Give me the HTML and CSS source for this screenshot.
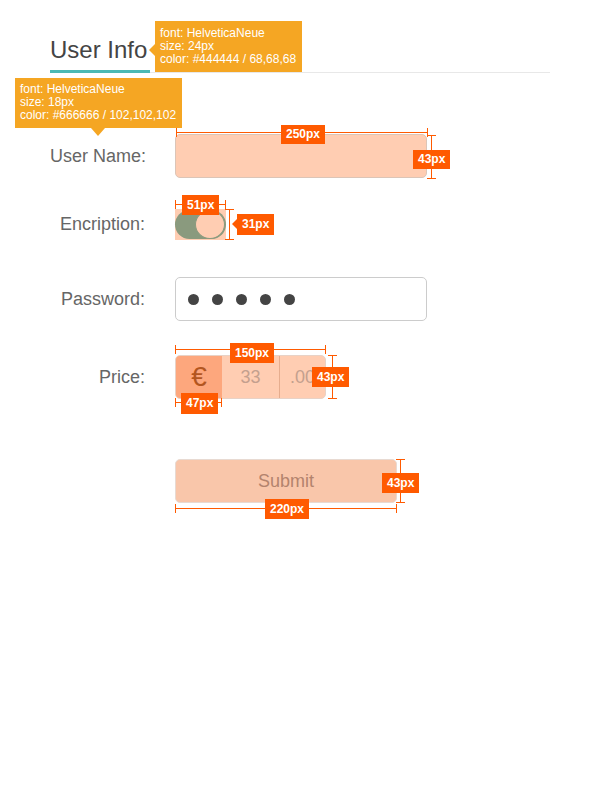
FILE: index.html
```html
<!DOCTYPE html>
<html>
<head>
<meta charset="utf-8">
<link rel="stylesheet" href="styles.css">
</head>
<body>
<div class="page">
  <div class="tabs">
    <div class="tab">User Info</div>
  </div>
  <div class="tip tip-left">font: HelveticaNeue<br>size: 24px<br>color: #444444 / 68,68,68</div>

  <div class="form">
    <div class="row row-name">
      <div class="label label-host">User Name:
        <div class="tip tip-down">font: HelveticaNeue<br>size: 18px<br>color: #666666 / 102,102,102</div>
      </div>
      <div class="field input-name">
        <div class="hline hl-name"></div>
        <div class="dim dim-name-w">250px</div>
        <div class="vline vl-name"></div>
        <div class="dim dim-name-h">43px</div>
      </div>
    </div>

    <div class="row row-enc">
      <div class="label">Encription:</div>
      <div class="field toggle">
        <div class="pill"><div class="knob"></div></div>
        <div class="hline hl-tog"></div>
        <div class="dim dim-tog-w">51px</div>
        <div class="vline vl-tog"></div>
        <div class="dim dim-tog-h arrow-left">31px</div>
      </div>
    </div>

    <div class="row row-pass">
      <div class="label">Password:</div>
      <div class="field input-pass">
        <span class="dot"></span><span class="dot"></span><span class="dot"></span><span class="dot"></span><span class="dot"></span>
      </div>
    </div>

    <div class="row row-price">
      <div class="label">Price:</div>
      <div class="field price">
        <div class="price-box">
          <div class="cell euro">€</div>
          <div class="cell whole">33</div>
          <div class="cell cents">.00</div>
        </div>
        <div class="hline hl-price"></div>
        <div class="dim dim-price-w">150px</div>
        <div class="vline vl-price"></div>
        <div class="dim dim-price-h">43px</div>
        <div class="hline hl-euro"></div>
        <div class="dim dim-euro-w">47px</div>
      </div>
    </div>

    <div class="row row-submit">
      <div class="label"></div>
      <div class="field submit-host">
        <div class="submit">Submit</div>
        <div class="vline vl-sub"></div>
        <div class="dim dim-sub-h">43px</div>
        <div class="hline hl-sub"></div>
        <div class="dim dim-sub-w">220px</div>
      </div>
    </div>
  </div>
</div>
</body>
</html>
```

FILE: styles.css
```css
* { box-sizing: border-box; }
html, body { margin: 0; padding: 0; background: #fff; }
body { font-family: "Liberation Sans", Arial, sans-serif; width: 600px; height: 800px; }

.page { position: relative; padding: 36px 50px 0; width: 600px; }

.tabs { display: flex; border-bottom: 1px solid #e8e8e8; width: 500px; }
.tab {
  width: 100px;
  font-size: 24px; line-height: 28px; color: #444;
  padding-bottom: 6px;
  border-bottom: 3px solid #4cb9b3;
  margin-bottom: -1px;
}

.tip {
  position: absolute;
  background: #f5a623;
  color: #fff;
  font-size: 12px; line-height: 13px;
  white-space: nowrap;
  z-index: 5;
}
.tip-left { left: 155px; top: 21px; width: 147px; height: 51px; padding: 6px 5px; }
.tip-left::before {
  content: ""; position: absolute; left: -6px; top: 23px;
  border-top: 6px solid transparent; border-bottom: 6px solid transparent;
  border-right: 6px solid #f5a623;
}
.tip-down { left: -35px; top: -68px; width: 167px; height: 50px; padding: 5px 5px; text-align: left; color: #fff; font-size: 12px; }
.tip-down::after {
  content: ""; position: absolute; left: 76px; bottom: -8px;
  border-left: 7px solid transparent; border-right: 7px solid transparent;
  border-top: 8px solid #f5a623;
}

.form { display: flex; flex-direction: column; margin-top: 61px; }
.row { display: flex; align-items: center; gap: 30px; }
.row-enc { margin-top: 31px; }
.row-pass { margin-top: 37px; }
.row-price { margin-top: 34px; }
.row-submit { margin-top: 60px; }

.label { width: 95px; text-align: right; font-size: 18px; line-height: 21px; color: #666; white-space: nowrap; }
.label-host { position: relative; }

.field { position: relative; }

.input-name {
  width: 252px; height: 44px;
  background: #ffcdb2;
  border: 1px solid #dcc5b7;
  border-radius: 5px;
}

.toggle { width: 51px; height: 31px; background: #ffcdb2; padding-top: 1px; }
.pill { width: 51px; height: 29px; border-radius: 15px; background: #8a9a7e; position: relative; }
.knob {
  position: absolute; right: 1px; top: 0;
  width: 30px; height: 29px; border-radius: 50%;
  background: #ffcdb2; border: 1.5px solid #8a9a7e;
}

.input-pass {
  width: 252px; height: 44px;
  background: #fff; border: 1px solid #cccccc; border-radius: 5px;
  display: flex; align-items: center; gap: 13px; padding-left: 12px;
}
.dot { width: 11px; height: 11px; border-radius: 50%; background: #444; }

.price { width: 151px; height: 44px; }
.price-box {
  display: flex; width: 151px; height: 44px;
  border: 1px solid #e8d2c6; border-radius: 5px; overflow: hidden;
  background: #ffcdb2;
}
.cell { display: flex; align-items: center; justify-content: center; font-size: 18px; color: #c4a08e; }
.euro { width: 46px; background: #fda77d; color: #b3561f; font-size: 28px; }
.whole { width: 57px; }
.cents { flex: 1; border-left: 1px solid #e6ad8e; }

.submit {
  width: 222px; height: 44px;
  background: #f9c6aa; border: 1px solid #e8dad2; border-radius: 5px;
  display: flex; align-items: center; justify-content: center;
  font-size: 18px; color: #b3836d;
}

/* dimension annotations */
.hline, .vline { position: absolute; background: #ff5a00; z-index: 3; }
.hline { height: 1px; }
.hline::before, .hline::after { content: ""; position: absolute; top: -4px; width: 1px; height: 9px; background: #ff5a00; }
.hline::before { left: 0; }
.hline::after { right: 0; }
.vline { width: 1px; }
.vline::before, .vline::after { content: ""; position: absolute; left: -4px; width: 9px; height: 1px; background: #ff5a00; }
.vline::before { top: 0; }
.vline::after { bottom: 0; }

.dim {
  position: absolute; z-index: 4;
  background: #ff5a00; color: #fff;
  font-size: 12px; font-weight: bold; line-height: 19px; height: 19px;
  padding: 0 5px; white-space: nowrap;
}
.arrow-left::before {
  content: ""; position: absolute; left: -5px; top: 5px;
  border-top: 5px solid transparent; border-bottom: 5px solid transparent;
  border-right: 5px solid #ff5a00;
}

.hl-name { left: 0; top: -3px; width: 252px; }
.dim-name-w { left: 105px; top: -10px; }
.vl-name { left: 255px; top: 0; height: 44px; }
.dim-name-h { left: 237px; top: 15px; height: 19px; }

.hl-tog { left: 0; top: -5px; width: 51px; }
.dim-tog-w { left: 7px; top: -14px; height: 20px; line-height: 20px; }
.vl-tog { left: 54px; top: 0; height: 31px; }
.dim-tog-h { left: 62px; top: 5px; height: 21px; line-height: 21px; }

.hl-price { left: 0; top: -6px; width: 151px; }
.dim-price-w { left: 55px; top: -12px; height: 20px; line-height: 20px; }
.vl-price { left: 157px; top: 0; height: 44px; }
.dim-price-h { left: 137px; top: 12px; height: 20px; line-height: 20px; }
.hl-euro { left: 0; top: 47px; width: 47px; }
.dim-euro-w { left: 6px; top: 38px; height: 21px; line-height: 21px; }

.vl-sub { left: 225px; top: 0; height: 44px; }
.dim-sub-h { left: 207px; top: 14px; height: 20px; line-height: 20px; }
.hl-sub { left: 0; top: 49px; width: 222px; }
.dim-sub-w { left: 90px; top: 40px; height: 20px; line-height: 20px; }
```
